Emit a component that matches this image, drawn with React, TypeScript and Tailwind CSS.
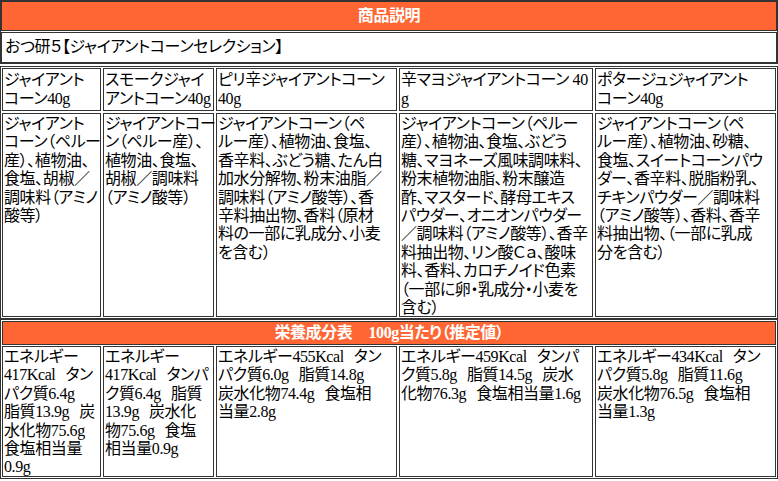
import React from "react";

// 商品ごとの行は元の表示どおりに改行位置を固定している
const names: string[][] = [
  ["ジャイアント", "コーン40g"],
  ["スモークジャイ", "アントコーン40g"],
  ["ピリ辛ジャイアントコーン", "40g"],
  ["辛マヨジャイアントコーン 40", "g"],
  ["ポタージュジャイアント", "コーン40g"],
];

const ingredients: string[][] = [
  ["ジャイアント", "コーン（ペルー", "産）、植物油、", "食塩、胡椒／", "調味料（アミノ", "酸等）"],
  ["ジャイアントコー", "ン（ペルー産）、", "植物油、食塩、", "胡椒／調味料", "（アミノ酸等）"],
  [
    "ジャイアントコーン（ペ",
    "ルー産）、植物油、食塩、",
    "香辛料、ぶどう糖、たん白",
    "加水分解物、粉末油脂／",
    "調味料（アミノ酸等）、香",
    "辛料抽出物、香料（原材",
    "料の一部に乳成分、小麦",
    "を含む）",
  ],
  [
    "ジャイアントコーン（ペルー",
    "産）、植物油、食塩、ぶどう",
    "糖、マヨネーズ風味調味料、",
    "粉末植物油脂、粉末醸造",
    "酢、マスタード、酵母エキス",
    "パウダー、オニオンパウダー",
    "／調味料（アミノ酸等）、香辛",
    "料抽出物、リン酸Ｃａ、酸味",
    "料、香料、カロチノイド色素",
    "（一部に卵・乳成分・小麦を",
    "含む）",
  ],
  [
    "ジャイアントコーン（ペ",
    "ルー産）、植物油、砂糖、",
    "食塩、スイートコーンパウ",
    "ダー、香辛料、脱脂粉乳、",
    "チキンパウダー／調味料",
    "（アミノ酸等）、香料、香辛",
    "料抽出物、（一部に乳成",
    "分を含む）",
  ],
];

const nutrition: string[][] = [
  ["エネルギー", "417Kcal　タン", "パク質6.4g", "脂質13.9g　炭", "水化物75.6g", "食塩相当量", "0.9g"],
  ["エネルギー", "417Kcal　タンパ", "ク質6.4g　脂質", "13.9g　炭水化", "物75.6g　食塩", "相当量0.9g"],
  ["エネルギー455Kcal　タン", "パク質6.0g　脂質14.8g", "炭水化物74.4g　食塩相", "当量2.8g"],
  ["エネルギー459Kcal　タンパ", "ク質5.8g　脂質14.5g　炭水", "化物76.3g　食塩相当量1.6g"],
  ["エネルギー434Kcal　タン", "パク質5.8g　脂質11.6g", "炭水化物76.5g　食塩相", "当量1.3g"],
];

const grid = "grid grid-cols-[99px_111px_181px_194px_1fr] gap-[2px]";

function Lines({ lines }: { lines: string[] }) {
  return (
    <>
      {lines.map((l, i) => (
        <div key={i} className="whitespace-nowrap">
          {l.split("　").map((part, j) => (
            <React.Fragment key={j}>
              {j > 0 && <span className="inline-block w-[10px]" />}
              {part}
            </React.Fragment>
          ))}
        </div>
      ))}
    </>
  );
}

export default function App() {
  return (
    <div className="w-[778px] bg-white text-black font-['Liberation_Serif','Noto_Sans_CJK_JP',serif] text-[16px] leading-[18.4px] tracking-[-0.4px] [font-feature-settings:'palt']">
      {/* 商品説明 */}
      <div className="border border-[#333] flex flex-col gap-px">
        <div className="h-[30px] border border-[#333] bg-[#ff6633] text-white font-bold flex items-center justify-center">
          商品説明
        </div>
        <div className="h-[31px] border border-[#333] flex items-center px-[3px]">
          おつ研５【ジャイアントコーンセレクション】
        </div>
      </div>

      {/* 商品名・原材料 */}
      <div className={`mt-[2px] border border-[#333] p-px ${grid}`}>
        {names.map((n, i) => (
          <div key={i} className="h-[43px] border border-[#333] px-px flex flex-col justify-center">
            <Lines lines={n} />
          </div>
        ))}
        {ingredients.map((n, i) => (
          <div key={i} className="h-[204px] border border-[#333] px-px pt-px">
            <Lines lines={n} />
          </div>
        ))}
      </div>

      {/* 栄養成分表 */}
      <div className="border border-[#333] p-px">
        <div className="h-[24px] border border-[#333] bg-[#ff6633] text-white font-bold flex items-center justify-center">
          栄養成分表<span className="inline-block w-[16px]" />100g当たり（推定値）
        </div>
        <div className={`mt-px ${grid}`}>
          {nutrition.map((n, i) => (
            <div key={i} className="h-[131px] border border-[#333] px-px pt-px">
              <Lines lines={n} />
            </div>
          ))}
        </div>
      </div>
    </div>
  );
}
